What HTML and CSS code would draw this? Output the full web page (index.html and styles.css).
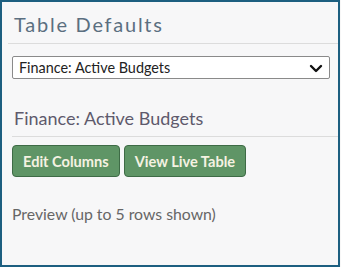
FILE: index.html
```html
<!DOCTYPE html>
<html lang="en">
<head>
  <meta charset="UTF-8">
  <title>Table Defaults</title>
  <link rel="stylesheet" href="styles.css">
</head>
<body>
  <div class="panel">
    <h1 class="title">Table Defaults</h1>

    <div class="content">
      <div class="select-box">
        <span>Finance: Active Budgets</span>
        <svg class="chevron" width="14" height="9" viewBox="0 0 14 9">
          <path d="M2 2 L7 7 L12 2" fill="none" stroke="#111" stroke-width="2.4" stroke-linecap="round" stroke-linejoin="round"/>
        </svg>
      </div>

      <h2 class="subtitle">Finance: Active Budgets</h2>

      <div class="actions">
        <button class="btn">Edit Columns</button>
        <button class="btn">View Live Table</button>
      </div>

      <p class="preview">Preview (up to 5 rows shown)</p>
    </div>
  </div>
</body>
</html>
```

FILE: styles.css
```css
body {
  margin: 0;
  padding: 0;
  font-family: Lato, 'Open Sans', sans-serif;
  background: #f7f7f7;
}

.panel {
  box-sizing: border-box;
  width: 340px;
  height: 267px;
  border: 2px solid #1d5f80;
  background: #f7f7f8;
  padding-left: 6px;
  overflow: hidden;
}

.title {
  margin: 0;
  height: 41px;
  padding: 0 0 0 6px;
  line-height: 45px;
  font-size: 20px;
  font-weight: 400;
  letter-spacing: 1.75px;
  color: #5b6f80;
  border-bottom: 1px solid #dcdcdc;
}

.content {
  padding: 12px 8px 0 4px;
}

.select-box {
  box-sizing: border-box;
  height: 23px;
  display: flex;
  align-items: center;
  justify-content: space-between;
  padding: 0 6px 0 6px;
  background: #fff;
  border: 1px solid #8a8a8a;
  border-radius: 2px;
  font-size: 14.4px;
  color: #222;
}

.chevron {
  margin-top: 1px;
}

.subtitle {
  margin: 28px -8px 0 0;
  padding: 0 0 7px 2px;
  font-size: 18px;
  font-weight: 400;
  line-height: 22px;
  color: #5e5a6c;
  border-bottom: 1px solid #dcdcdc;
}

.actions {
  display: flex;
  gap: 4px;
  margin-top: 8px;
}

.btn {
  height: 32px;
  padding: 0 10px;
  font-family: inherit;
  font-size: 14.6px;
  font-weight: 700;
  color: #f5f2e2;
  background: #5f9566;
  border: 1px solid #3e6b46;
  border-radius: 4px;
}

.preview {
  margin: 27px 0 0;
  font-size: 15.8px;
  color: #666;
}
```
